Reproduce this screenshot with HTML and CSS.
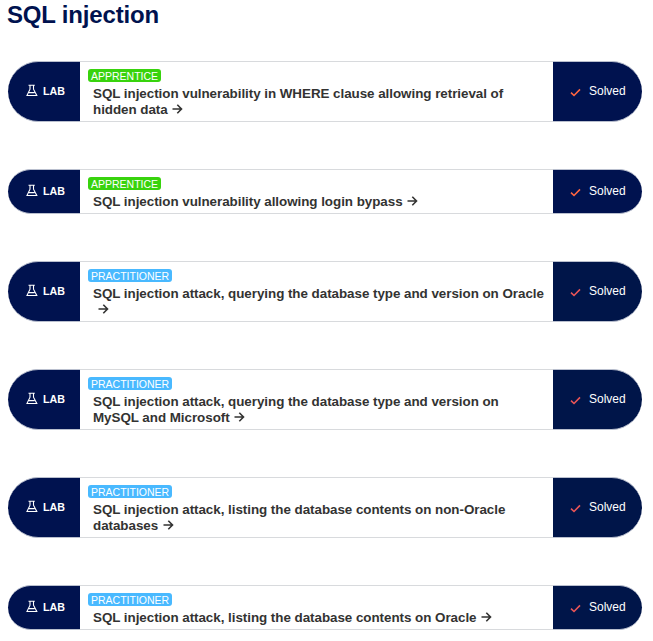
FILE: index.html
```
<!DOCTYPE html>
<html lang="en">
<head>
<meta charset="utf-8">
<title>SQL injection</title>
<link rel="stylesheet" href="styles.css">
</head>
<body>
<svg class="symbols" aria-hidden="true">
  <symbol id="flask" viewBox="0 0 12 13"><path d="M2.5 1.2H8.8M4 1.2V5.2L1 11.5H10.8L7.5 5.2V1.2M3 8.6H8.6" fill="none" stroke="currentColor" stroke-width="1.1"/></symbol>
  <symbol id="check" viewBox="0 0 11 9"><path d="M1 4.7L4 7.5L10 1.4" fill="none" stroke="currentColor" stroke-width="1.6"/></symbol>
  <symbol id="arrow" viewBox="0 0 11 10"><path d="M0.5 5H9.5M5.3 0.8L9.5 5L5.3 9.2" fill="none" stroke="currentColor" stroke-width="1.6"/></symbol>
</svg>
<h1>SQL injection</h1>
<main class="labs">
  <article class="lab">
    <div class="kind"><svg class="flask"><use href="#flask"/></svg><b>LAB</b></div>
    <div class="body"><span class="level apprentice">APPRENTICE</span><a class="title">SQL injection vulnerability in WHERE clause allowing retrieval of<br>hidden data <svg class="arrow"><use href="#arrow"/></svg></a></div>
    <div class="status"><svg class="check"><use href="#check"/></svg><span>Solved</span></div>
  </article>
  <article class="lab short">
    <div class="kind"><svg class="flask"><use href="#flask"/></svg><b>LAB</b></div>
    <div class="body"><span class="level apprentice">APPRENTICE</span><a class="title">SQL injection vulnerability allowing login bypass <svg class="arrow"><use href="#arrow"/></svg></a></div>
    <div class="status"><svg class="check"><use href="#check"/></svg><span>Solved</span></div>
  </article>
  <article class="lab">
    <div class="kind"><svg class="flask"><use href="#flask"/></svg><b>LAB</b></div>
    <div class="body"><span class="level practitioner">PRACTITIONER</span><a class="title">SQL injection attack, querying the database type and version on Oracle<br>&nbsp;<svg class="arrow"><use href="#arrow"/></svg></a></div>
    <div class="status soft"><svg class="check"><use href="#check"/></svg><span>Solved</span></div>
  </article>
  <article class="lab">
    <div class="kind"><svg class="flask"><use href="#flask"/></svg><b>LAB</b></div>
    <div class="body"><span class="level practitioner">PRACTITIONER</span><a class="title">SQL injection attack, querying the database type and version on<br>MySQL and Microsoft <svg class="arrow"><use href="#arrow"/></svg></a></div>
    <div class="status soft"><svg class="check"><use href="#check"/></svg><span>Solved</span></div>
  </article>
  <article class="lab">
    <div class="kind"><svg class="flask"><use href="#flask"/></svg><b>LAB</b></div>
    <div class="body"><span class="level practitioner">PRACTITIONER</span><a class="title">SQL injection attack, listing the database contents on non-Oracle<br>databases <svg class="arrow"><use href="#arrow"/></svg></a></div>
    <div class="status soft"><svg class="check"><use href="#check"/></svg><span>Solved</span></div>
  </article>
  <article class="lab short">
    <div class="kind"><svg class="flask"><use href="#flask"/></svg><b>LAB</b></div>
    <div class="body"><span class="level practitioner">PRACTITIONER</span><a class="title">SQL injection attack, listing the database contents on Oracle <svg class="arrow"><use href="#arrow"/></svg></a></div>
    <div class="status soft"><svg class="check"><use href="#check"/></svg><span>Solved</span></div>
  </article>
</main>
</body>
</html>
```
FILE: styles.css
```
* { box-sizing: border-box; }
body {
  margin: 0;
  padding: 0 11px 0 7px;
  height: 641px;
  overflow: hidden;
  background: #fff;
  color: #333332;
  font-family: "Liberation Sans", Arial, sans-serif;
}
.symbols { display: none; }
h1 {
  margin: 0;
  height: 61px;
  color: #00124f;
  font-size: 24px;
  letter-spacing: -0.18px;
  line-height: 29px;
}
.labs { display: grid; gap: 47px; }
.lab {
  display: flex;
  height: 61px;
  padding-left: 0.5px;
}
.short { height: 45px; }
.kind,
.status {
  display: flex;
  align-items: center;
  border: solid #b9bfce;
  border-width: 1px 0;
  background: #00124f;
  color: #fff;
}
.kind {
  gap: 5.5px;
  width: 72.5px;
  padding: 0 0 1px 18px;
  border-radius: 31px 0 0 31px;
  font-size: 10.67px;
}
.flask { width: 12px; height: 13px; margin-top: -2px; }
.body {
  flex: 1;
  padding: 7px 0 0 8px;
  border: solid #d8dadd;
  border-width: 1px 0;
}
.level {
  display: block;
  width: max-content;
  height: 13px;
  padding: 0 3px;
  border-radius: 3px;
  color: #fff;
  font-size: 10.5px;
  line-height: 14px;
}
.apprentice { background: #38d30d; }
.practitioner { background: #49b9ff; }
.title {
  display: block;
  padding: 4px 0 0 5px;
  font-size: 13.4px;
  font-weight: bold;
  letter-spacing: -0.04px;
  line-height: 16px;
  white-space: nowrap;
}
.arrow { width: 11px; height: 10px; margin-left: 1px; }
.status {
  gap: 8px;
  width: 89px;
  padding: 0 0 1px 17px;
  border-radius: 0 31px 31px 0;
  font-size: 12px;
}
.short .kind { border-radius: 23px 0 0 23px; }
.short .status { border-radius: 0 23px 23px 0; }
.status.soft { background: #001549; }
.check { width: 11px; height: 9px; margin-top: 3px; color: #ff6640; }
.soft .check { color: #e95557; }
```
